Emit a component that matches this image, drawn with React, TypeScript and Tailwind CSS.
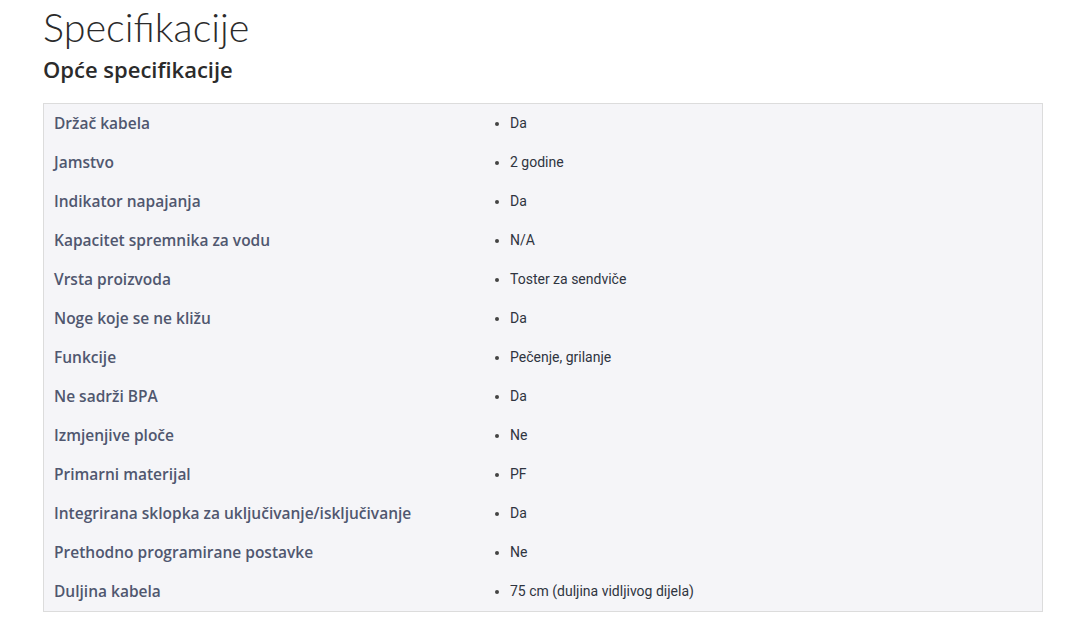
const specs: [string, string][] = [
  ["Držač kabela", "Da"],
  ["Jamstvo", "2 godine"],
  ["Indikator napajanja", "Da"],
  ["Kapacitet spremnika za vodu", "N/A"],
  ["Vrsta proizvoda", "Toster za sendviče"],
  ["Noge koje se ne kližu", "Da"],
  ["Funkcije", "Pečenje, grilanje"],
  ["Ne sadrži BPA", "Da"],
  ["Izmjenjive ploče", "Ne"],
  ["Primarni materijal", "PF"],
  ["Integrirana sklopka za uključivanje/isključivanje", "Da"],
  ["Prethodno programirane postavke", "Ne"],
  ["Duljina kabela", "75 cm (duljina vidljivog dijela)"],
];

const App = () => {
  return (
    <div className="bg-white min-h-screen pl-[43px] pr-[46px] pt-[3px] font-['Open_Sans',sans-serif]">
      <h1 className="text-[39.5px] leading-[48px] font-light font-['Lato',sans-serif] text-[#2b2b2b]">
        Specifikacije
      </h1>
      <h2 className="text-[22px] leading-[32px] font-semibold text-[#2b2b2b] mt-[2px]">
        Opće specifikacije
      </h2>
      <div className="mt-[18px] border border-[#dcdcdc] bg-[#f5f5f8]">
        {specs.map(([label, value]) => (
          <div key={label} className="grid grid-cols-[436px_1fr] h-[39px] items-center">
            <div className="pl-[10px] text-[15.5px] font-semibold text-[#50576f]">
              {label}
            </div>
            <ul className="list-disc pl-[30px] text-[14px] text-[#2f3440] font-['Roboto',sans-serif] marker:text-[#444]">
              <li>{value}</li>
            </ul>
          </div>
        ))}
      </div>
    </div>
  );
};

export default App;
